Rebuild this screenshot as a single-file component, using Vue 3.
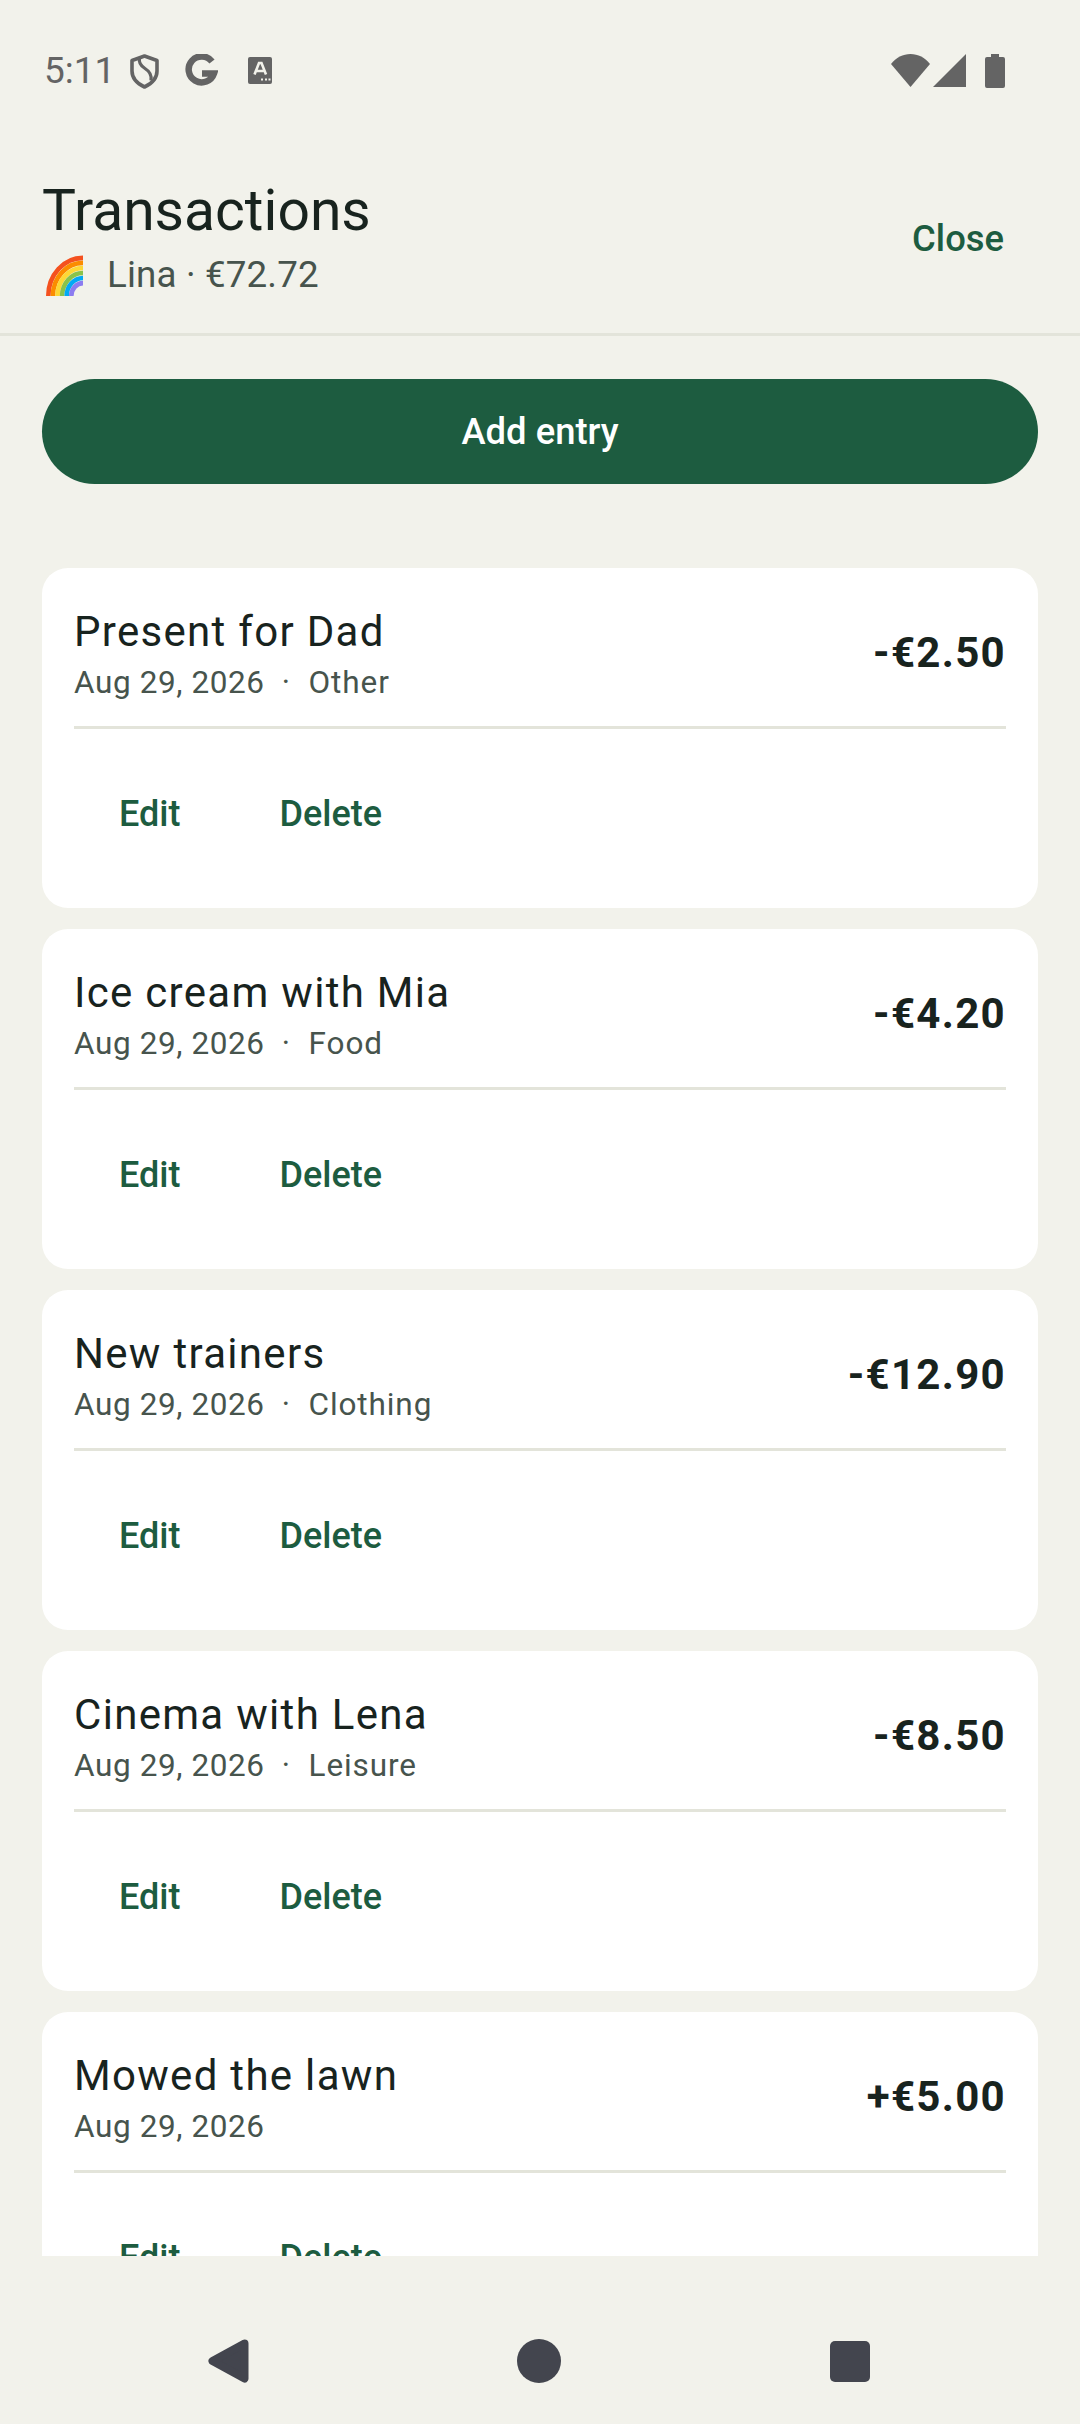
<template>
  <div class="screen">
    <div class="status">
      <div class="status-left">
        <span class="time">5:11</span>
        <svg class="ic-shield" viewBox="0 0 29 35">
          <path d="M14.500 2 27 6.500V17c0 7-5 12.500-12.500 16C7 29.500 2 24 2 17V6.500z" fill="none" stroke="#646464" stroke-width="3.600" stroke-linejoin="round" />
          <path d="M9.500 4c-1 5 1.500 8 5.500 10.500 4 2.500 7 6 6 12" fill="none" stroke="#646464" stroke-width="3.200" />
        </svg>
        <svg class="ic-g" viewBox="0 0 33 33">
          <path d="M27 7.500A13 13 0 1 0 29 19.500H17" fill="none" stroke="#646464" stroke-width="6.500" />
        </svg>
        <svg class="ic-a" viewBox="0 0 24 27">
          <rect width="24" height="27" rx="2" fill="#646464" />
          <path d="M6.500 17.500 11 6h2.500l4.500 11.500M8.500 14h7" fill="none" stroke="#f2f2eb" stroke-width="2.600" />
          <path d="M13 22.500h2M17 22.500h2M20.500 22.500h2" stroke="#f2f2eb" stroke-width="2" />
        </svg>
      </div>
      <div class="status-right">
        <svg class="ic-wifi" viewBox="0 0 39 33">
          <path d="M0 10C5 3.500 12 0 19.500 0S34 3.500 39 10L19.500 33z" fill="#646464" />
        </svg>
        <svg class="ic-signal" viewBox="0 0 33 33">
          <path d="M33 0v33H0z" fill="#646464" />
        </svg>
        <svg class="ic-battery" viewBox="0 0 20 34">
          <path d="M6 0h8v3h4a2 2 0 0 1 2 2v27a2 2 0 0 1-2 2H2a2 2 0 0 1-2-2V5a2 2 0 0 1 2-2h4z" fill="#646464" />
        </svg>
      </div>
    </div>

    <header class="header">
      <div>
        <h1 class="title">Transactions</h1>
        <div class="subtitle">
          <svg class="rainbow" viewBox="0 0 37 41">
            <g fill="none" stroke-width="4.600">
              <ellipse v-for="band in bands" :key="band.color" cx="37" cy="41" :rx="band.r" :ry="band.r * 1.1" :stroke="band.color" />
            </g>
          </svg>
          <span>Lina · €72.72</span>
        </div>
      </div>
      <button class="close">Close</button>
    </header>

    <main class="content">
      <button class="add">Add entry</button>
      <div class="list">
        <section v-for="item in transactions" :key="item.name" class="card">
          <div class="card-top">
            <div>
              <div class="name">{{ item.name }}</div>
              <div class="meta">
                <span>Aug 29, 2026</span>
                <template v-if="item.category">
                  <span class="dot">·</span>
                  <span class="category">{{ item.category }}</span>
                </template>
              </div>
            </div>
            <div class="amount">{{ item.amount }}</div>
          </div>
          <div class="divider"></div>
          <div class="actions">
            <button class="action">Edit</button>
            <button class="action">Delete</button>
          </div>
        </section>
      </div>
    </main>

    <nav class="nav">
      <svg class="nav-back" viewBox="0 0 41 44">
        <path d="M36.500 4.500 4.500 22l32 17.500z" fill="#43454e" stroke="#43454e" stroke-width="8" stroke-linejoin="round" />
      </svg>
      <div class="nav-home"></div>
      <div class="nav-recent"></div>
    </nav>
  </div>
</template>

<script setup>
const bands = [
  { r: 34.7, color: '#f4511e' },
  { r: 30.1, color: '#fb8c00' },
  { r: 25.5, color: '#fdd835' },
  { r: 20.9, color: '#8bc34a' },
  { r: 16.3, color: '#03a9f4' },
  { r: 11.7, color: '#8c7cf0' }
]

const transactions = [
  { name: 'Present for Dad', category: 'Other', amount: '-€2.50' },
  { name: 'Ice cream with Mia', category: 'Food', amount: '-€4.20' },
  { name: 'New trainers', category: 'Clothing', amount: '-€12.90' },
  { name: 'Cinema with Lena', category: 'Leisure', amount: '-€8.50' },
  { name: 'Mowed the lawn', category: '', amount: '+€5.00' }
]
</script>

<style>
html,
body {
  margin: 0;
  background: #f2f2eb;
}
</style>

<style scoped>
.screen {
  width: 1080px;
  height: 2424px;
  display: flex;
  flex-direction: column;
  background: #f2f2eb;
  font-family: Roboto, sans-serif;
  overflow: hidden;
}

button {
  border: none;
  background: none;
  padding: 0;
  font-family: inherit;
}

.status {
  height: 142px;
  flex: none;
  box-sizing: border-box;
  padding: 54px 75px 0 44px;
  display: flex;
  justify-content: space-between;
  align-items: flex-start;
}

.status-left,
.status-right {
  display: flex;
  align-items: flex-start;
}

.time {
  font-size: 37px;
  line-height: 34px;
  color: #646464;
  width: 86px;
}

.ic-shield {
  width: 29px;
  height: 35px;
}

.ic-g {
  width: 33px;
  height: 33px;
  margin-left: 26px;
}

.ic-a {
  width: 24px;
  height: 27px;
  margin: 3px 0 0 30px;
}

.ic-wifi {
  width: 39px;
  height: 33px;
}

.ic-signal {
  width: 33px;
  height: 33px;
  margin-left: 3px;
}

.ic-battery {
  width: 20px;
  height: 34px;
  margin-left: 19px;
}

.header {
  height: 194px;
  flex: none;
  box-sizing: border-box;
  padding: 40px 76px 0 42px;
  border-bottom: 3px solid #e3e4da;
  display: flex;
  justify-content: space-between;
  align-items: flex-start;
}

.title {
  margin: 0;
  font-size: 57px;
  font-weight: 400;
  line-height: 58px;
  color: #18231e;
}

.subtitle {
  margin-top: 14px;
  display: flex;
  align-items: center;
  font-size: 36.750px;
  line-height: 42px;
  letter-spacing: 0.150px;
  color: #47544d;
}

.rainbow {
  width: 37px;
  height: 41px;
  margin: 0 24px 0 4px;
}

.close {
  margin-top: 35px;
  font-size: 36.400px;
  line-height: 44px;
  font-weight: 500;
  color: #1d5c40;
}

.content {
  flex: 1;
  min-height: 0;
  overflow: hidden;
  padding: 43px 42px 0;
}

.add {
  display: block;
  width: 100%;
  height: 105px;
  border-radius: 53px;
  background: #1d5c40;
  color: #fff;
  font-size: 36.400px;
  font-weight: 500;
}

.list {
  margin-top: 84px;
  display: flex;
  flex-direction: column;
  gap: 21px;
}

.card {
  height: 340px;
  flex: none;
  box-sizing: border-box;
  padding: 38px 32px 0;
  background: #fff;
  border-radius: 26px;
}

.card-top {
  height: 120px;
  display: flex;
  justify-content: space-between;
  align-items: flex-start;
}

.name {
  font-size: 42px;
  line-height: 52px;
  letter-spacing: 1.300px;
  color: #18231e;
}

.meta {
  margin-top: 5px;
  display: flex;
  font-size: 31.500px;
  line-height: 40px;
  letter-spacing: 0.600px;
  color: #47544d;
}

.dot {
  margin: 0 18px 0 17px;
}

.category {
  letter-spacing: 0.900px;
}

.amount {
  margin-top: 21px;
  font-size: 42px;
  line-height: 52px;
  font-weight: 700;
  letter-spacing: 1.300px;
  color: #18231e;
}

.divider {
  height: 3px;
  background: #e3e4da;
}

.actions {
  display: flex;
  gap: 99px;
  padding: 63px 0 0 45px;
}

.action {
  font-size: 36px;
  line-height: 44px;
  font-weight: 500;
  color: #1d5c40;
}

.nav {
  height: 168px;
  flex: none;
  position: relative;
}

.nav-back {
  position: absolute;
  left: 208px;
  top: 83px;
  width: 41px;
  height: 44px;
}

.nav-home {
  position: absolute;
  left: 517px;
  top: 83px;
  width: 44px;
  height: 44px;
  border-radius: 50%;
  background: #43454e;
}

.nav-recent {
  position: absolute;
  left: 830px;
  top: 85px;
  width: 40px;
  height: 41px;
  border-radius: 5px;
  background: #43454e;
}
</style>
